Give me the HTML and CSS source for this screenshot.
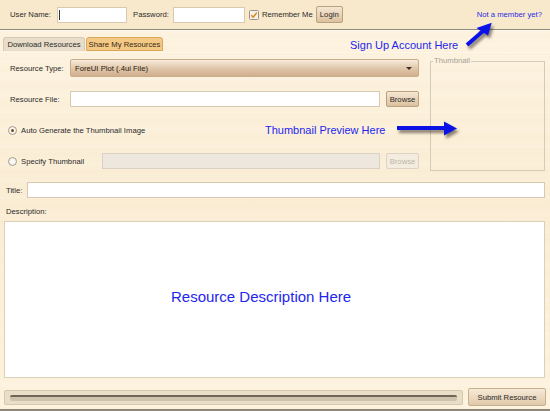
FILE: index.html
```html
<!DOCTYPE html>
<html>
<head>
<meta charset="utf-8">
<link rel="stylesheet" href="styles.css">
</head>
<body>
<div class="page">
  <div class="topbar">
    <span class="lbl">User Name:</span>
    <div class="input user"><span class="caret"></span></div>
    <span class="lbl pw">Password:</span>
    <div class="input pass"></div>
    <svg class="check" width="10" height="10" viewBox="0 0 10 10"><rect x="0.5" y="0.5" width="9" height="9" rx="1" fill="#f6f1e8" stroke="#9d9384"/><path d="M2.3 5.2 L4.2 7.2 L7.8 2.6" fill="none" stroke="#d9851a" stroke-width="1.5"/></svg>
    <span class="lbl rem">Remember Me</span>
    <div class="btn login">Login</div>
    <span class="spacer"></span>
    <span class="member">Not a member yet?</span>
  </div>

  <div class="tabs">
    <div class="tab">Download Resources</div>
    <div class="tab active">Share My Resources</div>
  </div>

  <div class="upper">
    <div class="fields">
      <div class="row r1">
        <span class="flabel">Resource Type:</span>
        <div class="select">ForeUI Plot (.4ui File)<span class="tri"></span></div>
      </div>
      <div class="row r2">
        <span class="flabel">Resource File:</span>
        <div class="input file"></div>
        <div class="btn browse">Browse</div>
      </div>
      <div class="row r3">
        <span class="radio on"></span>
        <span class="rlabel">Auto Generate the Thumbnail Image</span>
      </div>
      <div class="row r4">
        <span class="radio"></span>
        <span class="rlabel spec">Specify Thumbnail</span>
        <div class="input dis"></div>
        <div class="btn browse disabled">Browse</div>
      </div>
    </div>
    <fieldset class="thumb"><legend>Thumbnail</legend></fieldset>
  </div>

  <div class="titlerow">
    <span class="lbl">Title:</span>
    <div class="input title"></div>
  </div>
  <div class="desclabel">Description:</div>
  <div class="textarea"></div>

  <div class="bottom">
    <div class="progress"><div class="track"></div></div>
    <div class="btn submit">Submit Resource</div>
  </div>

  <div class="note note-signup">Sign Up Account Here</div>
  <div class="note note-thumb">Thumbnail Preview Here</div>
  <div class="note note-desc">Resource Description Here</div>

  <svg class="arrow arrow-up" width="40" height="40" viewBox="0 0 40 40">
    <line x1="7" y1="30" x2="23" y2="16" stroke="#0b12e6" stroke-width="4"/>
    <polygon points="31.7,7.7 28,20.5 16.5,13" fill="#0b12e6"/>
  </svg>
  <svg class="arrow arrow-right" width="70" height="25" viewBox="0 0 70 25">
    <rect x="5" y="8" width="48" height="4" fill="#0b12e6"/>
    <polygon points="52,3.5 65,10.5 52,17.5" fill="#0b12e6"/>
  </svg>
</div>
</body>
</html>
```
FILE: styles.css
```css
html, body {
  margin: 0;
  padding: 0;
}
body {
  width: 550px;
  height: 411px;
  overflow: hidden;
  font-family: "Liberation Sans", Arial, sans-serif;
  font-size: 7.7px;
  color: #2b2b2b;
}
.page {
  position: relative;
  width: 550px;
  height: 409px;
  border-bottom: 2px solid #8e887c;
  background-color: #fcf0da;
  background-image:
    linear-gradient(180deg, rgba(255, 250, 238, 0.35), rgba(246, 228, 196, 0.25) 50%, rgba(255, 248, 232, 0.3)),
    repeating-linear-gradient(180deg, rgba(238, 218, 180, 0.08) 0 3px, transparent 3px 9px, rgba(255, 255, 255, 0.12) 9px 12px, transparent 12px 17px);
}
.topbar {
  display: flex;
  align-items: center;
  height: 29px;
  padding-left: 10px;
  background: #f8e9cd;
  border-bottom: 1px solid #8f897e;
  box-shadow: 0 1px 0 #fffaf0;
}
.lbl { white-space: nowrap; }
.input {
  box-sizing: border-box;
  height: 16px;
  background: #fff;
  border: 1px solid #d8cab0;
}
.user {
  width: 70px;
  margin-left: 6px;
  position: relative;
}
.caret {
  position: absolute;
  left: 1px;
  top: 2px;
  width: 1px;
  height: 10px;
  background: #333;
}
.pw { margin-left: 6px; }
.pass {
  width: 72px;
  margin-left: 4px;
}
.check {
  margin-left: 4px;
  display: block;
}
.rem { margin-left: 3px; }
.btn {
  box-sizing: border-box;
  display: flex;
  align-items: center;
  justify-content: center;
  border: 1px solid #b9a27f;
  border-radius: 2px;
  background: linear-gradient(#f5e6d2, #dcc19f);
  color: #2b2b2b;
  white-space: nowrap;
}
.login {
  width: 27px;
  height: 17px;
  margin-left: 3px;
}
.spacer { flex: 1; }
.member {
  color: #2b2be2;
  margin-right: 8px;
  margin-top: -1px;
}
.tabs {
  display: flex;
  margin-top: 7px;
  padding-left: 3px;
  height: 14px;
  border-bottom: 1px solid #fff8e8;
  padding-bottom: 1px;
}
.tab {
  box-sizing: border-box;
  height: 14px;
  display: flex;
  align-items: center;
  justify-content: center;
  width: 82px;
  background: #e7ddc9;
  border: 1px solid #d6cab3;
  border-bottom: none;
  border-radius: 3px 3px 0 0;
}
.tab.active {
  width: 77px;
  margin-left: 1px;
  background: #f3c985;
  border-color: #dba55a;
  border-bottom: 1px solid #dba55a;
  color: #3a2a12;
}
.upper {
  display: flex;
  padding-left: 6px;
}
.fields {
  width: 414px;
}
.row {
  display: flex;
  align-items: center;
}
.flabel {
  width: 60px;
  padding-left: 4px;
  white-space: nowrap;
}
.r1 {
  margin-top: 6px;
  height: 18px;
}
.select {
  position: relative;
  box-sizing: border-box;
  width: 349px;
  height: 18px;
  display: flex;
  align-items: center;
  padding-left: 4px;
  border: 1px solid #c9ad8b;
  border-radius: 2px;
  background: linear-gradient(#f8ecdb, #e3cbb0 45%, #cfae8c);
  color: #2a2010;
}
.tri {
  position: absolute;
  right: 6px;
  top: 7px;
  width: 0;
  height: 0;
  border-left: 3px solid transparent;
  border-right: 3px solid transparent;
  border-top: 3px solid #3a3024;
}
.r2 {
  margin-top: 14px;
  height: 16px;
}
.file { width: 310px; }
.browse {
  width: 33px;
  height: 16px;
  margin-left: 6px;
}
.browse.disabled {
  background: #f4ecdf;
  border-color: #ddd3c3;
  color: #bcb6ac;
}
.r3 {
  margin-top: 16px;
  height: 14px;
}
.radio {
  box-sizing: border-box;
  width: 9px;
  height: 9px;
  margin-left: 2px;
  border-radius: 50%;
  border: 1px solid #a59d90;
  background: radial-gradient(circle, #fff 0, #efe9df 100%);
  position: relative;
}
.radio.on::after {
  content: "";
  position: absolute;
  left: 2px;
  top: 2px;
  width: 3px;
  height: 3px;
  border-radius: 50%;
  background: #7a4e1a;
}
.rlabel {
  margin-left: 4px;
  white-space: nowrap;
}
.r4 {
  margin-top: 16px;
  height: 16px;
}
.spec { width: 81px; }
.dis {
  width: 278px;
  background: #ede7dd;
  border-color: #d9d1c3;
}
.thumb {
  box-sizing: border-box;
  margin: 4px 0 0 10px;
  padding: 0;
  width: 115px;
  height: 114px;
  border: 1px solid #d3cab9;
}
.thumb legend {
  margin-left: 2px;
  padding: 0 1px;
  color: #a59e92;
  line-height: 8px;
}
.titlerow {
  display: flex;
  align-items: center;
  margin-top: 11px;
  padding-left: 6px;
  padding-right: 5px;
  height: 16px;
}
.title {
  flex: 1;
  margin-left: 5px;
}
.desclabel {
  margin-top: 9px;
  padding-left: 6px;
  height: 10px;
  line-height: 10px;
}
.textarea {
  box-sizing: border-box;
  margin: 4px 5px 0 4px;
  height: 157px;
  background: #fff;
  border: 1px solid #dccfb6;
}
.bottom {
  display: flex;
  align-items: center;
  margin-top: 10px;
  padding-left: 4px;
  padding-right: 4px;
  height: 18px;
}
.progress {
  box-sizing: border-box;
  width: 459px;
  height: 15px;
  padding: 4px 5px 0 5px;
  background: #e9dec8;
  border: 1px solid #d6c9ae;
  border-radius: 2px;
}
.track {
  height: 4px;
  border-top: 2px solid #6f6656;
  background: #cfc3ad;
  border-radius: 2px;
}
.submit {
  width: 78px;
  height: 18px;
  margin-left: 5px;
  background: linear-gradient(#f7ead8, #e0c9aa);
  border-color: #c6b090;
}
.note {
  position: absolute;
  color: #1e26ee;
  white-space: nowrap;
  font-size: 11px;
}
.note-signup {
  left: 350px;
  top: 39px;
}
.note-thumb {
  left: 265px;
  top: 124px;
}
.note-desc {
  left: 171px;
  top: 288px;
  font-size: 15px;
}
.arrow {
  position: absolute;
  filter: drop-shadow(2px 3px 1.5px rgba(40, 30, 20, 0.55));
}
.arrow-up {
  left: 460px;
  top: 15px;
}
.arrow-right {
  left: 392px;
  top: 118px;
}
```
